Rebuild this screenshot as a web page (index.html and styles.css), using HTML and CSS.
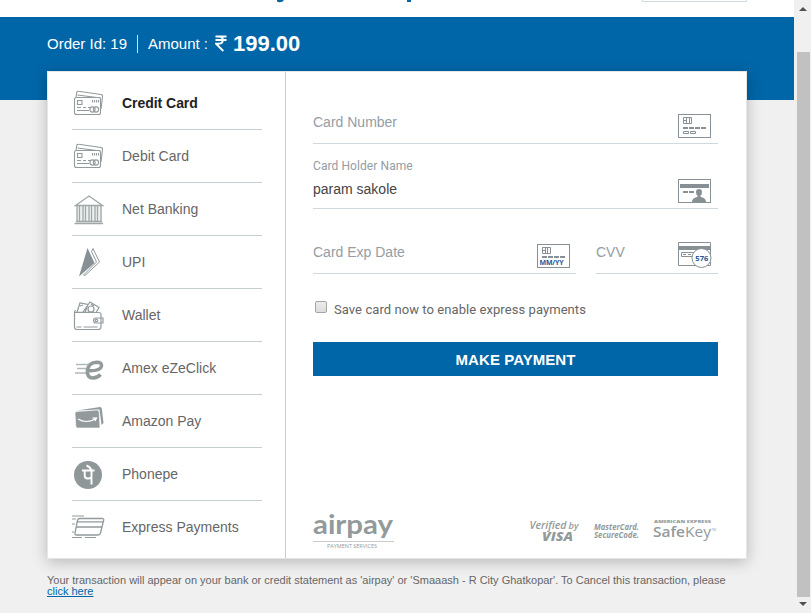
FILE: index.html
```html
<!DOCTYPE html>
<html lang="en">
<head>
<meta charset="utf-8">
<title>Payment</title>
<link rel="stylesheet" href="styles.css">
</head>
<body>
<svg class="defs" width="0" height="0" aria-hidden="true">
  <symbol id="cards" viewBox="0 0 32 28">
    <g fill="none" stroke="#929a9d" stroke-width="1.1">
      <path d="M4 8.500 4.800 3.500Q5 2 6.500 2.300L29 5.500Q30.800 5.800 30.500 7.500L29 20"/>
      <path d="M5.500 6 28.500 9"/>
      <rect x="2.500" y="8.500" width="26" height="17" rx="2" fill="#fff"/>
      <rect x="5.500" y="11.500" width="4.500" height="4"/>
      <path d="M20.500 11v2.500M22.500 11v2.500M24.500 11v2.500M26.500 11v2.500M5 18.500h4m2 0h3m2 0h2M5 21.500h12"/>
      <circle cx="20.500" cy="20.500" r="2.600"/><circle cx="24" cy="20.500" r="2.600"/>
    </g>
  </symbol>
</svg>
<div class="window">
  <div class="page">
    <header class="top">
      <svg class="title-edge" width="140" height="3" viewBox="0 0 140 3"><path d="M0 0H7Q5.500 2.500 2 2.200L0 1.600ZM130 0h4v2h-4Z" fill="#0066a8"/></svg>
      <div class="logo-box"></div>
    </header>
    <div class="order"><span class="oid">Order Id: 19</span><span class="amt">Amount :</span><svg class="rupee" width="12" height="17" viewBox="0 0 12 17"><path d="M.5 1.500H11.500M.5 5H11.500M1 1.500H4Q7.800 1.500 7.800 5T3.800 8.800H1.200L8.300 16" fill="none" stroke="#fff" stroke-width="1.900"/></svg><b class="total">199.00</b></div>
    <main class="card">
      <nav class="menu">
        <a class="item active"><svg width="32" height="28"><use href="#cards"/></svg><span>Credit Card</span></a>
        <a class="item"><svg width="32" height="28"><use href="#cards"/></svg><span>Debit Card</span></a>
        <a class="item"><svg width="32" height="32" viewBox="0 0 32 32"><path d="M5 13h25v15H5Z" fill="#eef0f0"/><g fill="none" stroke="#a0a7a8" stroke-width="1.300"><path d="M3.500 12.500 17 3 30.500 12.500ZM5 13v15M7.500 13v15M11 13v15M13.500 13v15M17 13v15M19.500 13v15M23 13v15M25.500 13v15M29 13v15"/><path d="M4 28.500H30M2.500 30.500H31" stroke-width="1.500"/></g></svg><span>Net Banking</span></a>
        <a class="item"><svg width="32" height="32" viewBox="0 0 32 32"><path d="M15.500 2 7 30.500 22.500 17Z" fill="#879095"/><path d="M21 2.500 27.500 16 13 29.500 11.500 29M21 2.500l-1.500 3 5 10.500L11.500 29" fill="none" stroke="#929a9d"/></svg><span>UPI</span></a>
        <a class="item"><svg width="32" height="32" viewBox="0 0 32 32"><g fill="#fff" stroke="#929a9d" stroke-width="1.200"><path d="m5 13 3-9 8 1.500-3 8ZM11 13l7-10 9 5.500-3 5Z"/><circle cx="19" cy="10" r="3"/><path d="m8 7 3-1m8-1 3 2"/><path d="M4 11.500Q2.500 11.500 2.500 13V28Q2.500 30.500 5 30.500H26Q29 30.500 29 28V15.500Q29 13.500 26.500 13.500H3M4.500 28h5m2 0h14M28 19h3v5h-7q-2.500 0-2.500-2.500T24 19Z"/><circle cx="24.500" cy="21.500" r="1.200"/></g></svg><span>Wallet</span></a>
        <a class="item ezeclick"><svg width="32" height="28" viewBox="0 0 32 28"><path d="M4 8.500h13M5 12.500h10M3 17h12" stroke="#b2b8b9" stroke-width="1.300"/><path d="M17 14.800Q28.500 15 29.500 10Q30 6.200 24.500 6.200Q16.500 6.500 15.400 14.500Q14.700 22 21 22Q25.500 22 28.500 18.500" fill="none" stroke="#929a9b" stroke-width="3.600"/></svg><span>Amex eZeClick</span></a>
        <a class="item amazon"><svg width="32" height="28" viewBox="0 0 32 28"><path d="M5 6.500 28 3Q29.500 3 29.800 4.500L31.500 19 29.500 21 27.500 5.500 5 6.500Z" fill="#929a9b"/><path d="M3 9.500Q3 7.500 5 7.500L24.500 6Q27 6 27.200 8L28 24H5.500Q4 24 3.800 22Z" fill="#929a9b" stroke="#fff" stroke-width=".6"/><path d="M6 15Q14 20 23.500 15m-3-.8 4-.2-1.500 3" fill="none" stroke="#fff" stroke-width="1.200"/></svg><span>Amazon Pay</span></a>
        <a class="item phonepe"><svg width="32" height="32" viewBox="0 0 32 32"><circle cx="16" cy="16" r="14" fill="#8f9798"/><path d="M10 11.500H22.500M12.700 12v4.500q0 3 3 3 2.800 0 3.800-1M19.500 11v14.500M19.500 11.500Q18.500 8 14.500 6.500" fill="none" stroke="#fff" stroke-width="1.900"/></svg><span>Phonepe</span></a>
        <a class="item"><svg class="express" width="34" height="28" viewBox="0 0 34 28"><path d="M0 3H12M0 6H4M0 11H3M0 19H2M0 24.500H10M13 24.500H24" stroke="#929a9d"/><path d="M7.500 5.500H30Q32 5.500 31.700 7L28.500 20Q28 22 26 22H4.500Q2.500 22 3 20L5.500 7.500Q6 5.500 7.500 5.500ZM5.500 8.800H31M4.500 14H30" fill="none" stroke="#929a9d" stroke-width="1.300"/></svg><span>Express Payments</span></a>
      </nav>
      <section class="form">
        <div class="field number"><span class="ph">Card Number</span>
          <svg width="33" height="24" viewBox="0 0 33 24"><g fill="none" stroke="#879095"><rect x=".5" y=".5" width="32" height="23"/><path d="M5.500 3.500h8v6h-8ZM8.500 3.500v6m3-6v6M5 6.500h3M5.500 17.500h5v2h-5Zm7 0h5v2h-5Z"/><path d="M5 14h5m1 0h5m1 0h5m1 0h5" stroke-width="2"/></g></svg></div>
        <div class="field holder"><div><label>Card Holder Name</label><span class="val">param sakole</span></div>
          <svg width="33" height="24" viewBox="0 0 33 24"><rect x=".5" y=".5" width="32" height="23" fill="none" stroke="#879095"/><path d="M2 5h29v4H2Z" fill="#879095"/><path d="M5 13h5m1 0h5" stroke="#879095" stroke-width="2"/><path d="M14 23q0-4 5-5l1-1q-2-1-2-4t3-3q3 0 3 3t-2 4l1 1q5 1 5 5Z" fill="#879095"/></svg></div>
        <div class="split">
          <div class="field"><span class="ph">Card Exp Date</span>
            <svg width="33" height="24" viewBox="0 0 33 24"><g fill="none" stroke="#879095"><rect x=".5" y=".5" width="32" height="23"/><path d="M5.500 3.500h8v6h-8ZM8.500 3.500v6m2-6v6M5 6.500h3"/><path d="M5 13h5m1 0h5m1 0h5m1 0h5" stroke-width="2"/></g><text x="2.500" y="21.300" class="mini date" textLength="24">MM/YY</text></svg></div>
          <div class="field cvv"><span class="ph">CVV</span>
            <svg width="34" height="27" viewBox="0 0 34 27"><path d="M.5.500h32v23H.5Z" fill="none" stroke="#879095"/><path d="M0 4h33v4H0Z" fill="#879095"/><path d="M3.500 10.500h16v4h-16ZM5 12.500h3m2 0h3" fill="none" stroke="#879095"/><circle cx="23.500" cy="16" r="9.500" fill="#fff" stroke="#879095"/><text x="17.300" y="18.500" class="mini" textLength="13">576</text></svg></div>
        </div>
        <div class="save"><span class="box"></span><span>Save card now to enable express payments</span></div>
        <button class="pay">MAKE PAYMENT</button>
        <div class="badges">
          <svg class="brand" width="82" height="40" viewBox="0 0 82 40"><text x="0" y="23.500" class="airpay" textLength="80" lengthAdjust="spacingAndGlyphs">airpay</text><path d="M0 31.500H81" stroke="#c8cccc"/><text x="14" y="38" class="services" textLength="50" lengthAdjust="spacingAndGlyphs">PAYMENT SERVICES</text></svg>
          <svg class="marks" width="188" height="26" viewBox="0 0 188 26"><g fill="#929a9b"><text x="-.5" y="10" class="it" font-size="11.500" textLength="37" lengthAdjust="spacingAndGlyphs">Verified</text><text x="38.500" y="10" class="it" font-size="9.500" textLength="10" lengthAdjust="spacingAndGlyphs">by</text><text x="12" y="21.500" class="it bd" font-size="13" textLength="31" lengthAdjust="spacingAndGlyphs">VISA</text><text x="64" y="10.500" class="it semib" font-size="9" textLength="45" lengthAdjust="spacingAndGlyphs">MasterCard.</text><text x="64" y="19" class="it semib" font-size="9" textLength="45" lengthAdjust="spacingAndGlyphs">SecureCode.</text><text x="124" y="4" class="bd" font-size="4" textLength="57" lengthAdjust="spacingAndGlyphs">AMERICAN EXPRESS</text><text x="123" y="17.500" font-size="14.500" textLength="58" lengthAdjust="spacingAndGlyphs"><tspan class="semi">Safe</tspan>Key</text><text x="181.500" y="12" font-size="3">TM</text></g></svg>
        </div>
      </section>
    </main>
    <p class="note">Your transaction will appear on your bank or credit statement as 'airpay' or 'Smaaash - R City Ghatkopar'. To Cancel this transaction, please<br><a href="#">click here</a></p>
  </div>
  <aside class="scroll"><i class="arrow"></i><i class="thumb"></i><i class="arrow down"></i></aside>
</div>
</body>
</html>
```
FILE: styles.css
```css
* { box-sizing: border-box; }
body { margin: 0; font-family: "Liberation Sans", Arial, sans-serif; color: #666; overflow: hidden; }
svg { display: block; flex: none; }
.defs { position: absolute; }
.window { display: flex; width: 811px; height: 613px; background: #f0f0f0; }
.page { width: 794px; background: linear-gradient(#0066a8, #0066a8) 0 17px / 100% 83px no-repeat; }
.top { height: 17px; background: #fff; display: flex; justify-content: space-between; padding: 0 47px 0 277px; }
.logo-box { width: 105px; height: 2px; border: 1px solid #d0dadf; border-top: 0; }
.order { height: 54px; display: flex; align-items: center; padding: 0 0 1px 47px; color: #fff; font-size: 15px; white-space: nowrap; }
.oid { width: 91px; height: 18px; border-right: 1px solid #d4e4ef; line-height: 18px; }
.amt { margin-left: 10px; width: 67px; }
.rupee { margin-top: -1px; }
.total { font-size: 22px; margin-left: 6px; line-height: 22px; }
.card { width: 700px; height: 488px; margin-left: 47px; display: flex; background: #fff; border: 1px solid #e6e6e6; box-shadow: 0 3px 14px rgba(0,0,0,.24); }
.menu { width: 238px; padding: 5px 23px 0 24px; border-right: 1px solid #ccc; flex: none; }
.item { display: flex; align-items: center; height: 53px; border-bottom: 1px solid #c6ced2; font-size: 14px; }
.item:last-child { border: 0; height: 52px; }
.item svg { margin-right: 18px; }
.item .express { margin-right: 16px; }
.item.amazon svg { margin-top: -6px; }
.item.phonepe svg { margin-top: 2px; }
.item.ezeclick svg { margin-top: 3px; }
.active { font-weight: bold; color: #222; letter-spacing: -.04px; }
.form { flex: 1; padding: 31px 28px 0 27px; display: flex; flex-direction: column; }
.field { display: flex; justify-content: space-between; border-bottom: 1px solid #d0dade; padding-right: 7px; }
.ph { color: #949da3; font-size: 14px; line-height: 16px; }
.number { height: 41px; padding-top: 11px; }
.holder { height: 65px; padding-top: 15px; }
.holder svg { margin-top: 20px; }
label, .val { display: block; }
label { font: 12px/14px Roboto, sans-serif; color: #949da3; letter-spacing: .08px; }
.val { font-size: 14px; line-height: 16px; margin-top: 8px; color: #444; }
.split { display: flex; gap: 20px; }
.split .field { width: 263px; height: 65px; padding: 35px 6px 0 0; }
.split .cvv { width: 122px; }
.cvv svg { margin-top: -2px; }
.mini { font: 700 7.5px "Open Sans", sans-serif; fill: #23569b; }
.date { font-size: 7px; }
.save { display: flex; height: 18px; margin: 27px 0 23px 2px; font: 13px/18px Roboto, sans-serif; letter-spacing: .07px; }
.box { width: 12px; height: 12px; border: 1px solid #a5a5a5; border-radius: 2px; margin: 0 7px 0 0; background: linear-gradient(#ececec, #dcdcdc); }
.pay { height: 34px; border: 0; padding: 0; background: #0066a8; color: #fff; font: bold 15px "Liberation Sans", Arial, sans-serif; letter-spacing: .06px; }
.badges { display: flex; justify-content: space-between; margin-top: 134px; }
.brand, .marks { overflow: visible; }
.marks { margin-top: 9px; font-family: "Open Sans", sans-serif; }
.it { font-style: italic; font-weight: 600; }
.semib { font-family: "Open Sans", sans-serif; font-weight: 700; }
.bd { font-weight: 800; }
.semi { font-weight: 600; }
.airpay { font: 700 27px Lato, sans-serif; fill: #929a9b; }
.services { font: 5.5px "Open Sans", sans-serif; fill: #929a9b; }
.note { margin: 16px 0 0 47px; font-size: 11px; line-height: 11px; white-space: nowrap; }
.note a { color: #0066a8; }
.scroll { width: 17px; background: #f0f0f0; display: flex; flex-direction: column; align-items: center; }
.arrow { border: 4px solid transparent; border-top: 0; border-bottom-color: #505050; margin-top: 7px; }
.thumb { width: 13px; height: 545px; background: #c1c1c1; margin: 41px 0 0 2px; }
.down { transform: rotate(180deg); margin-top: 5px; }
```
